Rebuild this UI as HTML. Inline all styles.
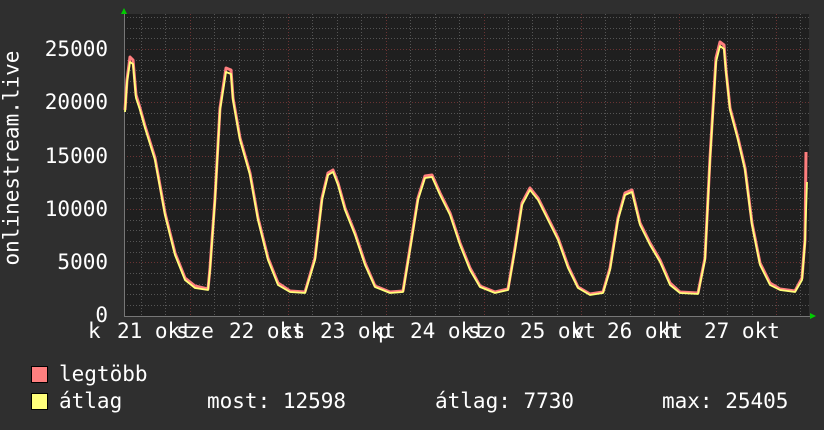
<!DOCTYPE html><html><head><meta charset="utf-8"><style>
body{margin:0;width:824px;height:430px;background:#2f2f2f;overflow:hidden;position:relative;font-family:"DejaVu Sans Mono","Liberation Mono",monospace;color:#fff}
.t{position:absolute;font-size:21px;line-height:21px;white-space:pre}
</style></head><body>
<svg width="824" height="430" style="position:absolute;left:0;top:0">
<rect x="124" y="14" width="685" height="302" fill="#1f1f1f"/>
<g stroke="#555" stroke-width="1" stroke-dasharray="1,2">
<line x1="124" x2="809" y1="305.5" y2="305.5"/><line x1="124" x2="809" y1="294.5" y2="294.5"/><line x1="124" x2="809" y1="284.5" y2="284.5"/><line x1="124" x2="809" y1="273.5" y2="273.5"/>
<line x1="124" x2="809" y1="252.5" y2="252.5"/><line x1="124" x2="809" y1="241.5" y2="241.5"/><line x1="124" x2="809" y1="230.5" y2="230.5"/><line x1="124" x2="809" y1="220.5" y2="220.5"/>
<line x1="124" x2="809" y1="198.5" y2="198.5"/><line x1="124" x2="809" y1="188.5" y2="188.5"/><line x1="124" x2="809" y1="177.5" y2="177.5"/><line x1="124" x2="809" y1="166.5" y2="166.5"/>
<line x1="124" x2="809" y1="145.5" y2="145.5"/><line x1="124" x2="809" y1="134.5" y2="134.5"/><line x1="124" x2="809" y1="124.5" y2="124.5"/><line x1="124" x2="809" y1="113.5" y2="113.5"/>
<line x1="124" x2="809" y1="92.5" y2="92.5"/><line x1="124" x2="809" y1="81.5" y2="81.5"/><line x1="124" x2="809" y1="70.5" y2="70.5"/><line x1="124" x2="809" y1="60.5" y2="60.5"/>
<line x1="124" x2="809" y1="38.5" y2="38.5"/><line x1="124" x2="809" y1="28.5" y2="28.5"/><line x1="124" x2="809" y1="17.5" y2="17.5"/>
<line y1="14" y2="316" x1="141.5" x2="141.5"/><line y1="14" y2="316" x1="165.5" x2="165.5"/><line y1="14" y2="316" x1="214.5" x2="214.5"/><line y1="14" y2="316" x1="239.5" x2="239.5"/><line y1="14" y2="316" x1="263.5" x2="263.5"/>
<line y1="14" y2="316" x1="312.5" x2="312.5"/><line y1="14" y2="316" x1="337.5" x2="337.5"/><line y1="14" y2="316" x1="361.5" x2="361.5"/>
<line y1="14" y2="316" x1="410.5" x2="410.5"/><line y1="14" y2="316" x1="435.5" x2="435.5"/><line y1="14" y2="316" x1="459.5" x2="459.5"/>
<line y1="14" y2="316" x1="508.5" x2="508.5"/><line y1="14" y2="316" x1="532.5" x2="532.5"/><line y1="14" y2="316" x1="557.5" x2="557.5"/>
<line y1="14" y2="316" x1="605.5" x2="605.5"/><line y1="14" y2="316" x1="630.5" x2="630.5"/><line y1="14" y2="316" x1="654.5" x2="654.5"/>
<line y1="14" y2="316" x1="703.5" x2="703.5"/><line y1="14" y2="316" x1="727.5" x2="727.5"/><line y1="14" y2="316" x1="752.5" x2="752.5"/><line y1="14" y2="316" x1="800.5" x2="800.5"/>
</g>
<g stroke="#6a3333" stroke-width="1" stroke-dasharray="1,2">
<line x1="124" x2="809" y1="262.5" y2="262.5"/><line x1="124" x2="809" y1="209.5" y2="209.5"/><line x1="124" x2="809" y1="156.5" y2="156.5"/><line x1="124" x2="809" y1="102.5" y2="102.5"/><line x1="124" x2="809" y1="49.5" y2="49.5"/>
<line y1="14" y2="316" x1="190.5" x2="190.5"/><line y1="14" y2="316" x1="288.5" x2="288.5"/><line y1="14" y2="316" x1="386.5" x2="386.5"/><line y1="14" y2="316" x1="484.5" x2="484.5"/><line y1="14" y2="316" x1="581.5" x2="581.5"/><line y1="14" y2="316" x1="679.5" x2="679.5"/><line y1="14" y2="316" x1="776.5" x2="776.5"/>
</g>
<line x1="124" x2="812" y1="316.5" y2="316.5" stroke="#777"/>
<line x1="124.5" x2="124.5" y1="12" y2="316" stroke="#777"/>
<polygon points="121,14 127,14 124,8" fill="#0c0"/>
<polygon points="810,313 810,319 816,316" fill="#0c0"/>
<g fill="none" stroke-linejoin="round">
<polyline stroke="#ff7f7f" stroke-width="3" points="125,110 127,80 130,57 133,60 136,95 140,108 145,126 155,158 165,213 175,253 185,278 195,286 208,289 210,268 215,198 220,108 226,68 231,70 233,98 240,138 250,173 258,218 268,258 278,283 290,291 305,292 315,258 322,198 328,173 333,170 338,183 345,208 355,233 365,263 375,286 390,292 403,291 410,248 418,198 425,176 432,175 440,193 450,213 460,243 470,268 480,286 495,292 508,289 515,248 522,203 530,188 538,198 548,218 558,238 568,266 578,287 590,294 603,292 610,268 618,218 625,193 632,190 640,223 650,243 660,260 670,283 680,292 698,293 705,258 710,158 716,58 720,42 724,45 726,70 730,108 738,138 745,168 752,223 760,263 770,283 780,289 795,291 802,278 805,240 806,152"/>
<polyline stroke="#ffff7a" stroke-width="1.8" points="125,112 127,82 130,62 133,64 136,98 140,110 145,128 155,160 165,215 175,255 185,280 195,288 208,290 210,270 215,200 220,110 226,72 231,74 233,100 240,140 250,175 258,220 268,260 278,285 290,292 305,293 315,260 322,200 328,175 333,172 338,185 345,210 355,235 365,265 375,287 390,293 403,292 410,250 418,200 425,178 432,177 440,195 450,215 460,245 470,270 480,287 495,293 508,290 515,250 522,205 530,190 538,200 548,220 558,240 568,268 578,288 590,295 603,293 610,270 618,220 625,195 632,192 640,225 650,245 660,262 670,285 680,293 698,294 705,260 710,160 716,62 720,46 724,49 726,72 730,110 738,140 745,170 752,225 760,265 770,285 780,290 795,292 802,280 805,242 807,182"/>
</g>
<rect x="31.5" y="366.5" width="16" height="16" fill="#ff7f7f" stroke="#000"/>
<rect x="31.5" y="393.5" width="16" height="16" fill="#ffff7a" stroke="#000"/>
</svg>
<div class="t" style="left:-88px;top:155px;width:200px;text-align:center;transform:rotate(-90deg)">onlinestream.live</div>
<div class="t" style="left:40px;top:39px;width:68px;text-align:right">25000</div>
<div class="t" style="left:40px;top:92px;width:68px;text-align:right">20000</div>
<div class="t" style="left:40px;top:146px;width:68px;text-align:right">15000</div>
<div class="t" style="left:40px;top:199px;width:68px;text-align:right">10000</div>
<div class="t" style="left:40px;top:252px;width:68px;text-align:right">5000</div>
<div class="t" style="left:40px;top:305px;width:68px;text-align:right">0</div>
<div class="t" style="left:88px;top:321px">k</div>
<div class="t" style="left:117px;top:321px">21 okt</div><div class="t" style="left:176px;top:321px">sze</div>
<div class="t" style="left:229px;top:321px">22 okt</div><div class="t" style="left:280px;top:321px">cs</div>
<div class="t" style="left:320px;top:321px">23 okt</div><div class="t" style="left:378px;top:321px">p</div>
<div class="t" style="left:410px;top:321px">24 okt</div><div class="t" style="left:468px;top:321px">szo</div>
<div class="t" style="left:520px;top:321px">25 okt</div><div class="t" style="left:572px;top:321px">v</div>
<div class="t" style="left:607px;top:321px">26 okt</div><div class="t" style="left:664px;top:321px">h</div>
<div class="t" style="left:704px;top:321px">27 okt</div>
<div class="t" style="left:59px;top:364px">legtöbb</div>
<div class="t" style="left:59px;top:391px">átlag</div>
<div class="t" style="left:207px;top:391px">most: 12598</div>
<div class="t" style="left:435px;top:391px">átlag: 7730</div>
<div class="t" style="left:662px;top:391px">max: 25405</div>
</body></html>
